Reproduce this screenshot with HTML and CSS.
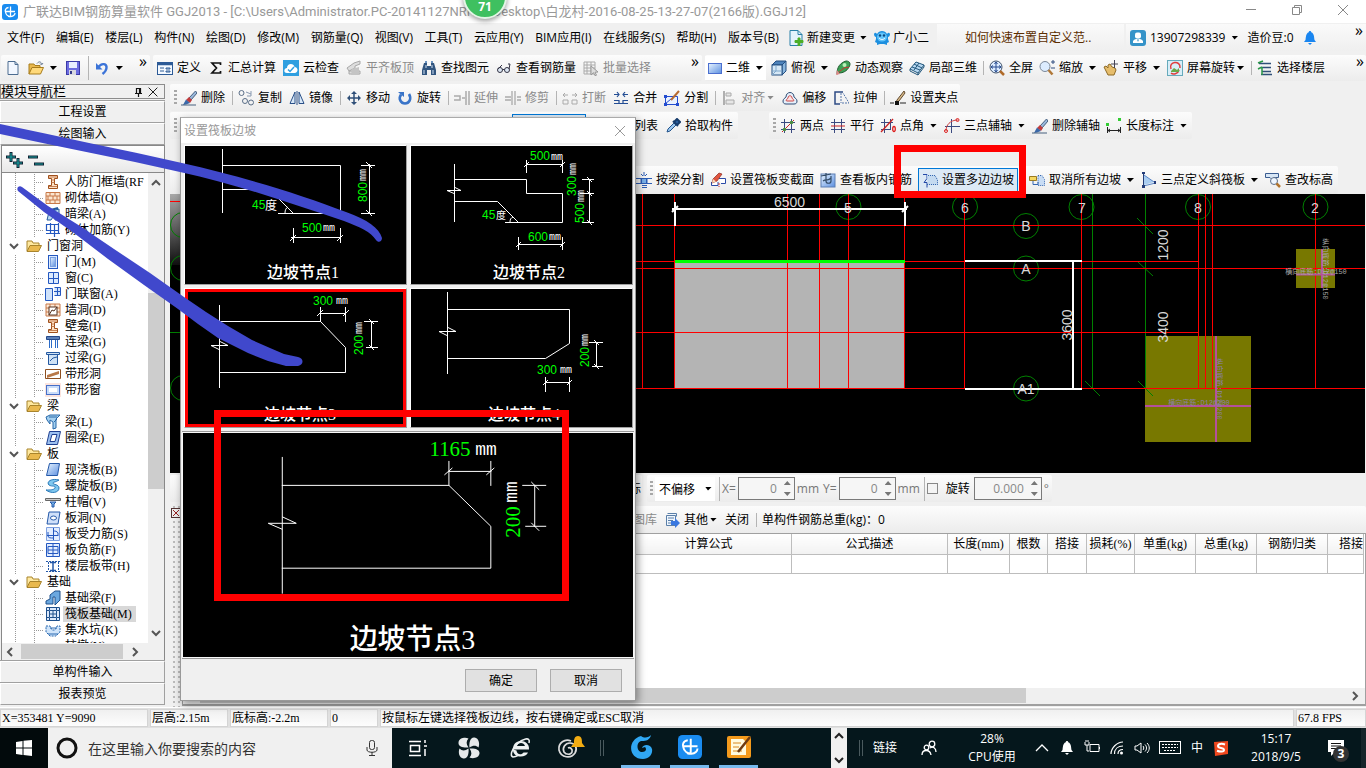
FILE: index.html
```html
<!DOCTYPE html>
<html lang="zh-CN">
<head>
<meta charset="utf-8">
<title>广联达BIM钢筋算量软件 GGJ2013</title>
<link rel="stylesheet" href="styles.css">
</head>
<body>
<svg class="defs" aria-hidden="true">
<defs>
<linearGradient id="blueGrad" x1="0" y1="0" x2="1" y2="1"><stop offset="0" stop-color="#e8f4ff"/><stop offset="1" stop-color="#5b8fe0"/></linearGradient>
<linearGradient id="shade" x1="0" y1="0" x2="0" y2="1"><stop offset="0" stop-color="#a8a8a8"/><stop offset="1" stop-color="#101010"/></linearGradient>
<symbol id="app" viewBox="0 0 16 16"><rect width="16" height="16" rx="3" fill="#1a8cf0"/><path d="M8.500 2.500v8.500c0 2-2 2-2.500.5M3.500 7.500h9.500M6.500 3.500C3 4 3 7 3.500 8c.5 3 3 4.500 5.500 4.500s4-2 4-3.500" fill="none" stroke="#fff" stroke-width="1.300"/></symbol>
<symbol id="new" viewBox="0 0 16 16"><path d="M3 1.500h7l3 3v10H3z" fill="#f2f7ff" stroke="#4c6c90"/><path d="M10 1.500v3h3" fill="none" stroke="#4c6c90"/></symbol>
<symbol id="open" viewBox="0 0 16 16"><path d="M1 14V4h5l1 1.500h5V8" fill="#e9b84d" stroke="#a77c1d"/><path d="M1 14l3-6.500h11.500L12.500 14z" fill="#ffd97a" stroke="#a77c1d"/><path d="M9 3.500c2-2.500 4-2 4.500.5M12 3.500l1.500 1.500 1.500-2" fill="none" stroke="#6a7c94"/></symbol>
<symbol id="save" viewBox="0 0 16 16"><rect x="1.500" y="1.500" width="13" height="13" fill="#6c6ce0" stroke="#3a3aa8"/><rect x="4" y="2" width="8" height="6" fill="#e8eeff"/><rect x="4" y="10" width="7" height="5" fill="#d8d8e0"/><rect x="5" y="11" width="2" height="3" fill="#333a8a"/></symbol>
<symbol id="undo" viewBox="0 0 16 16"><path d="M4 7.500C8 2 13 4 12.500 8c-.3 3-2 4.500-4 6" fill="none" stroke="#3c74d8" stroke-width="2.400"/><path d="M2 3v6.500h6.500z" fill="#3c74d8"/></symbol>
<symbol id="define" viewBox="0 0 16 16"><rect x=".5" y="2.500" width="15" height="12" fill="#f4f9ff" stroke="#2c5a96"/><path d="M1 4h14" stroke="#2c5a96" stroke-width="2.500"/><path d="M3 8h4M3 11h4M9 8h4v1H9zM9 11h4v1H9z" stroke="#2c5a96" fill="none"/></symbol>
<symbol id="sigma" viewBox="0 0 16 16"><path d="M12.500 5V3H4l4.500 5L4 13h8.500v-2" fill="none" stroke="#111" stroke-width="1.700"/></symbol>
<symbol id="cloud" viewBox="0 0 16 16"><rect width="16" height="16" fill="#2f9fe0"/><path d="M4 13c-4 0-3-5 0-5 0-5 7-5 7.500-1 4 0 4 6 0 6z" fill="#fff"/><path d="M5 9.500l2 2 4-4.500" fill="none" stroke="#2f9fe0" stroke-width="1.500"/></symbol>
<symbol id="flatten" viewBox="0 0 16 16"><path d="M1 8l7-5 6-2v3L9 6v2l-6 3zM3 11h11v3H3z" fill="#ddd" stroke="#a8a8a8"/><path d="M6 9l7-2v8H5z" fill="#c4c4c4"/></symbol>
<symbol id="bino" viewBox="0 0 16 16"><path d="M3 3h3v3h4V3h3l2 7v5h-5v-5H6v5H1v-5z" fill="#31557f"/><path d="M4 1h2v2H4zM10 1h2v2h-2z" fill="#6c94c0"/><path d="M3 10v4M12 10v4M5 5v3M11 5v3" stroke="#cfe0f4"/></symbol>
<symbol id="glasses" viewBox="0 0 16 16"><circle cx="4" cy="10" r="2.500" fill="#dde8f4" stroke="#334"/><circle cx="11" cy="10" r="2.500" fill="#dde8f4" stroke="#334"/><path d="M6.500 9.500h2M2 9l4-4M13 9l1-5h-2" fill="none" stroke="#334"/></symbol>
<symbol id="batch" viewBox="0 0 16 16"><path d="M1 2h11v12H1zM1 5h11M1 8h11M1 11h11M4 2v12M8 2v12" fill="none" stroke="#aaa"/><path d="M8 6l7 6-3 .2 1.500 3-1.500.5-1.500-3L8 15z" fill="#ddd" stroke="#999"/></symbol>
<symbol id="rect2d" viewBox="0 0 16 16"><rect x="1.500" y="3.500" width="13" height="10" fill="url(#blueGrad)" stroke="#4b6fd0"/></symbol>
<symbol id="cube" viewBox="0 0 16 16"><path d="M1 5l4-4h10l-4 4z" fill="#4e83bb" stroke="#234e80"/><path d="M11 5l4-4v10l-4 4z" fill="#8ab6de" stroke="#234e80"/><rect x="1" y="5" width="10" height="10" fill="#d6e8f6" stroke="#234e80"/><path d="M5 5v6H1M5 11l-4 4M5 11h6" fill="none" stroke="#7ea8cc"/></symbol>
<symbol id="orbit" viewBox="0 0 16 16"><path d="M2 14C2 7 5 3 11 1c4 0 5 3 3 6-2 4-6 6-10 6z" fill="#3ca054" stroke="#205c30"/><path d="M4 12l5-4 5-1" stroke="#c33" fill="none"/><circle cx="9.500" cy="5" r="2" fill="#b8efb8"/><path d="M1 15l4-1-3-4z" fill="#d88"/></symbol>
<symbol id="local3d" viewBox="0 0 16 16"><path d="M1 9l6-7 8 3-6 8z" fill="#b7d8f2" stroke="#22577c"/><path d="M3 7l8 3M5 4l8 4M5 10l5-7M9 13v2l6-8V5M1 9v2l8 4" fill="none" stroke="#22577c"/></symbol>
<symbol id="full" viewBox="0 0 16 16"><circle cx="7" cy="7" r="6" fill="#dcecff" stroke="#43546c"/><path d="M7 2v10M2 7h10M5.500 4L7 2l1.500 2M5.500 10L7 12l1.500-2M4 5.500L2 7l2 1.500M10 5.500L12 7l-2 1.500" stroke="#274b90" fill="none"/><path d="M11 11l4 4" stroke="#b06a28" stroke-width="2.500"/></symbol>
<symbol id="zoom" viewBox="0 0 16 16"><circle cx="6" cy="6.500" r="5" fill="#dcecff" stroke="#7a8798"/><path d="M9.500 10l4 4.500" stroke="#b07838" stroke-width="2.500"/><path d="M12 2h4M14 0v4M12 8h4" stroke="#334e80"/></symbol>
<symbol id="hand" viewBox="0 0 16 16"><path d="M1 7l2-1 2 2V5l2-1 2 3 3 1 1 2-2 5H5z" fill="#e6bd6c" stroke="#8e6a25"/><path d="M11.500 0v8M8 4h7" stroke="#445"/></symbol>
<symbol id="rotscr" viewBox="0 0 16 16"><rect x=".5" y=".5" width="15" height="15" fill="#d8eef8" stroke="#6ab"/><path d="M4 9c-3-8 10-9 9-1M12 10c-1 4-6 5-8 3" fill="none" stroke="#e03c3c" stroke-width="1.500"/><path d="M4 11l3-3 3 2 2-2v4H4z" fill="#68a848"/></symbol>
<symbol id="floors" viewBox="0 0 16 16"><path d="M2 3.500h12M5 7.500h9M5 11.500h9M4 14.500h11" stroke="#2f4f78" stroke-width="1.500"/><path d="M1 3l5-2M5 7v8M1 9l4-2" stroke="#2a9848" stroke-width="1.500" fill="none"/></symbol>
<symbol id="brush" viewBox="0 0 16 16"><path d="M14.500 1L8 8l2 2 6-7z" fill="#9ab8dc" stroke="#46607f"/><path d="M8 7l3 3-2 3-4-3z" fill="#c23a3a"/><path d="M5 9.500l4 3.500-4 1.500-3 .5z" fill="#3a68a8"/><path d="M0 15h15" stroke="#46607f"/></symbol>
<symbol id="copy" viewBox="0 0 16 16"><g fill="none" stroke="#5b6f88"><circle cx="3.500" cy="3" r="2.500"/><circle cx="7" cy="11" r="2.500"/><circle cx="13" cy="12.500" r="2.500"/></g><path d="M8 2l5 2M13 1v5h-4" fill="none" stroke="#8899b0"/></symbol>
<symbol id="mirror" viewBox="0 0 16 16"><path d="M6 2v11.500H1zM10 2v11.500h5z" fill="#d8e8f8" stroke="#2a5088"/><path d="M8 1v14" stroke="#2a5088"/></symbol>
<symbol id="move" viewBox="0 0 16 16"><path d="M8 2v12M2 8h12" stroke="#2f4f78" stroke-width="1.500"/><path d="M5 4l3-3 3 3zM5 12l3 3 3-3zM4 5L1 8l3 3zM12 5l3 3-3 3z" fill="#2f4f78"/></symbol>
<symbol id="rotate" viewBox="0 0 16 16"><path d="M4 4.500C1 9 4 13.500 8 13.500S15 9 12 4" fill="none" stroke="#3974c8" stroke-width="2.600"/><path d="M1 2h6v5z" fill="#3974c8"/></symbol>
<symbol id="extend" viewBox="0 0 16 16"><path d="M0 6h6v4H0M8 8h3M15 1v14M12 1v14" fill="none" stroke="#aaa" stroke-width="1.500"/></symbol>
<symbol id="trim" viewBox="0 0 16 16"><path d="M0 7h6M0 10h6M7 1v14M10 1v14M12 7h4M12 10h4" stroke="#aaa" stroke-width="1.300"/></symbol>
<symbol id="brk" viewBox="0 0 16 16"><path d="M1 5h5M3 3L1 5l2 2M10 5h5M13 3l2 2-2 2M1 10h5v4H1zM10 10h5v4h-5z" fill="none" stroke="#aaa"/></symbol>
<symbol id="merge" viewBox="0 0 16 16"><path d="M1 4.500h5M4 2l2 2.500L4 7M15 4.500h-5M12 2l-2 2.500L12 7M1 10.500h5v3H1M15 10.500h-5v3h5M6 13.500h4" fill="none" stroke="#234d94" stroke-width="1.200"/></symbol>
<symbol id="split" viewBox="0 0 16 16"><path d="M1.500 6.500h12v8h-12z" fill="#eaf2ff" stroke="#234cd0"/><path d="M1 14l6-5" stroke="#234cd0"/><path d="M15 1L7 10" stroke="#b86b30" stroke-width="2"/><path d="M0 5h3v3H0zM12 13h3v3h-3zM0 13h3v3H0z" fill="#234cd0"/></symbol>
<symbol id="align" viewBox="0 0 16 16"><path d="M3 1v14" stroke="#999" stroke-width="1.500"/><path d="M5 3h5v3H5zM5 10h8v4H5z" fill="#e6e6e6" stroke="#aaa"/></symbol>
<symbol id="offset" viewBox="0 0 16 16"><path d="M1 11c0-2 2-3 3-4 0-6 8-6 8 0 1 1 3 2 3 4s-1 3-3 3H4c-2 0-3-1-3-3z" fill="#e6f0fb" stroke="#2e4b74"/><path d="M4.500 11c-1-1 1-2 1.500-3 0-3 4-3 4 0 .5 1 2.500 2 1.500 3z" fill="#fbe4e4" stroke="#c44"/></symbol>
<symbol id="stretch" viewBox="0 0 16 16"><path d="M10 2H2v12h5" fill="none" stroke="#2e4b84" stroke-width="1.500"/><path d="M8 3v10M9 13h7L10 3" fill="none" stroke="#5677aa" stroke-dasharray="2 1"/></symbol>
<symbol id="grippt" viewBox="0 0 16 16"><path d="M14 1L7 10l-1 3 3-2 6-8z" fill="#d8ba88" stroke="#604a30"/><path d="M0 13h4M10 13h6" stroke="#222"/><path d="M5 11h4v4H5z" fill="#111"/></symbol>
<symbol id="picker" viewBox="0 0 16 16"><path d="M2 14l1-3 6-6 2 2-6 6z" fill="#9cc8f0" stroke="#24548c"/><path d="M8 3l5 5M9 4l3-3 3 3-3 3" stroke="#173c6c" stroke-width="2" fill="#2c60a0"/></symbol>
<symbol id="ax2" viewBox="0 0 16 16"><path d="M1 4.500h14M1 11.500h14M4.500 1v14M11.500 1v14" stroke="#3a4a80"/><path d="M2 14L14 2" stroke="#c22"/><circle cx="4.500" cy="11.500" r="1.800" fill="#4a9040"/><circle cx="11.500" cy="4.500" r="1.800" fill="#4a9040"/></symbol>
<symbol id="axp" viewBox="0 0 16 16"><path d="M1 4.500h14M1 11.500h14M4.500 1v14M11.500 1v14" stroke="#3a4a80"/><path d="M1 8h14" stroke="#c22"/></symbol>
<symbol id="axa" viewBox="0 0 16 16"><path d="M1 4.500h12M1 11.500h10M4.500 1v14M10.500 1v11" stroke="#3a4a80"/><path d="M1 14L13 1" stroke="#c22" stroke-width="1.300"/><ellipse cx="14" cy="11" rx="1.300" ry="2.500" fill="none" stroke="#d22" stroke-width="1.300"/></symbol>
<symbol id="ax3" viewBox="0 0 16 16"><path d="M1 8.500h15M7.500 1v14" stroke="#3a4a80"/><path d="M2 13C2 7 6 2 14 2" fill="none" stroke="#c44"/><circle cx="2" cy="13" r="1.500" fill="none" stroke="#d22"/><circle cx="13.500" cy="2" r="1.500" fill="none" stroke="#d22"/></symbol>
<symbol id="dim" viewBox="0 0 16 16"><path d="M1.500 9v6M14.500 9v6M1 12.500h14M4 11l-2 1.500L4 14M12 11l2 1.500-2 1.500" fill="none" stroke="#222"/><path d="M0 5h3v3H0zM12 0h3v3h-3z" fill="#3c3"/></symbol>
<symbol id="beamsplit" viewBox="0 0 16 16"><path d="M0 6.500h5v5H0M16 6.500h-5v5h5M6 13.500h5M6 15.500h5" fill="none" stroke="#2c5db4"/><rect x="5.500" y="6.500" width="5" height="5" fill="#79b0e8" stroke="#2c5db4"/><path d="M8 0v4M5 2l2 2M11 2L9 4" stroke="#2c5db4"/></symbol>
<symbol id="section" viewBox="0 0 16 16"><path d="M1.500 10v3.500H8V10M9 6.500h6.500v5H11" fill="#fff" stroke="#2b4ba8"/><path d="M9 1l3 1-5 7-5 2 1-4z" fill="#e0553f" stroke="#8a2a20" stroke-width=".7"/><path d="M2 11l1-4 3 2.500z" fill="#f7dcc0"/><path d="M9 11v4" stroke="#c33" stroke-dasharray="2 1"/></symbol>
<symbol id="viewrebar" viewBox="0 0 16 16"><rect x="1" y="2" width="14" height="13" fill="url(#blueGrad)" stroke="#5d7fb4"/><path d="M1 4l10-2M6 1v8c0 3 5 3 5 0V4M3 9c4-3 4 1 8-3" fill="none" stroke="#334c68" stroke-width="1.200"/></symbol>
<symbol id="slope" viewBox="0 0 16 16"><path d="M1 2.500h4v4l-3 4h3v5" fill="none" stroke="#2449a8"/><path d="M5 3h8l3 5v5H6z" fill="#c4daf0"/><path d="M6 3.500h7l2.500 4.500v5M5 12.500h10" fill="none" stroke="#3466b0" stroke-dasharray="1 1"/></symbol>
<symbol id="cancelslope" viewBox="0 0 16 16"><path d="M9 3.500h4l2.500 4v6H9z" fill="#c8dcf4" stroke="#3466b0" stroke-dasharray="1 1"/><path d="M.5 4.500h7v4h-7z" fill="#f5d760" stroke="#9a7a20"/><path d="M4 9v3.500h5V10" fill="none" stroke="#3466b0"/></symbol>
<symbol id="plane3" viewBox="0 0 16 16"><path d="M3 3v10l10-3z" fill="#a9cdf1"/><path d="M2.500 1v13l12-3L3 3" fill="none" stroke="#5b86c8"/><path d="M1 13h3v3H1zM13 9h2v3h-2zM1 0h3v2H1z" fill="#243c78"/><path d="M2.500 1v13" stroke="#243c78"/></symbol>
<symbol id="elev" viewBox="0 0 16 16"><path d="M.5 1.500h13v4H9v4L5 5.500H.5z" fill="#d7e6f5" stroke="#3a5c90"/><circle cx="9" cy="9" r="3.500" fill="#eef6ff" stroke="#5d6f88"/><path d="M11.500 11.500L15 15" stroke="#b2742d" stroke-width="2.500"/></symbol>
<symbol id="newchg" viewBox="0 0 16 16"><path d="M2 .5h8l4 4v11H2z" fill="#e3f2fc" stroke="#2a80a8"/><path d="M10 .5v4h4" fill="none" stroke="#2a80a8"/><path d="M10 8h2v2.500h3v2h-3V16h-2v-3.500H7v-2h3z" fill="#4cae28" stroke="#4cae28"/></symbol>
<symbol id="bot" viewBox="0 0 16 16"><path d="M0 4c1-2 2-1 3 0 2-4 8-4 10 0 1-1 2-2 3 0 0 2-1 3-2 3v2l1 3-2 1v2l-3-1H6l-3 1v-2l-2-1 1-3V7C1 7 0 6 0 4z" fill="#1d8fdf"/><ellipse cx="8" cy="7" rx="5" ry="4.500" fill="#62c4fa"/><circle cx="6" cy="5.500" r="1.200" fill="#0c4880"/><circle cx="10" cy="5.500" r="1.200" fill="#0c4880"/><path d="M5 8c2 2 4 2 6 0" stroke="#fff" fill="none"/></symbol>
<symbol id="user" viewBox="0 0 16 16"><rect width="16" height="16" rx="3" fill="#3593c8"/><rect x="5" y="2.500" width="6" height="6" rx="2" fill="#fff"/><path d="M3 13v-2c2-3 8-3 10 0v2z" fill="#fff"/><path d="M7 9.500h2L8 12z" fill="#3593c8"/></symbol>
<symbol id="bell" viewBox="0 0 16 16"><path d="M8 1c1 0 1.200.6 1.200 1.300C12.500 3.500 12 8 12.500 10l1.500 2H2l1.500-2C4 8 3.500 3.500 6.800 2.300 6.800 1.600 7 1 8 1z" fill="currentColor"/><path d="M6 13h4l-2 2z" fill="currentColor"/></symbol>
<symbol id="export" viewBox="0 0 16 16"><path d="M3.500 1.500h9v3M2.500 3.500h9v10h-9z" fill="#eef5fd" stroke="#5a7fa8"/><path d="M4 6h6M4 8.500h5M4 11h3" stroke="#5a7fa8"/><path d="M7 9h4V6l5 5-5 5v-3H7z" fill="#3a78e0"/></symbol>
<symbol id="folder" viewBox="0 0 16 16"><path d="M1 13V3h5l1 2h6v3" fill="#ffe9a0" stroke="#a8842c"/><path d="M1 13.500l3-6h11.500l-3 6z" fill="#e9b94e" stroke="#a8842c"/></symbol>
<symbol id="tframe" viewBox="0 0 16 16"><path d="M3.500 1.500h9v3h-3v6h3v4h-9v-3h3v-7h-3z" fill="#ffe2c4" stroke="#a0501c"/><path d="M6 6h4M6 8.500h4M4 12.500h8M4 3h8" stroke="#b8683a" stroke-width=".8"/></symbol>
<symbol id="tbrick" viewBox="0 0 16 16"><path d="M1 2.500h14v11H1zM1 6h14M1 10h14M5 2v4M10 2v4M3 6v4M8 6v4M12 6v4M5 10v4M10 10v4" fill="#fbe6d0" stroke="#c87948"/></symbol>
<symbol id="thidden" viewBox="0 0 16 16"><path d="M2 14l2-8 10-3v11h-4V8L6 14z" fill="#bcdcf4" stroke="#24589c"/><path d="M2 5l11-3" stroke="#24589c" stroke-width="2"/></symbol>
<symbol id="trebar" viewBox="0 0 16 16"><path d="M1.500 2.500h12v6h-12zM1 11.500h14M5.500 1v11M9.500 3v12M13.500 1v11" fill="none" stroke="#2458c0" stroke-width="1.200"/></symbol>
<symbol id="tdoor" viewBox="0 0 16 16"><rect x="3.500" y="1.500" width="9" height="13" fill="#dcebff" stroke="#2458c0"/><rect x="5.500" y="3.500" width="5" height="9" fill="url(#blueGrad)" stroke="#7aa0e0"/></symbol>
<symbol id="twin" viewBox="0 0 16 16"><path d="M3.500 2.500h10v11h-10zM8.500 2v12M3 8.500h11" fill="#dcebff" stroke="#2458c0"/></symbol>
<symbol id="tdw" viewBox="0 0 16 16"><path d="M.5 2.500h7v12h-7zM9.500 1.500h6v8h-6M12.500 1v8M9 5.500h7" fill="#cfe2fb" stroke="#2458c0"/></symbol>
<symbol id="thole" viewBox="0 0 16 16"><path d="M1 2h14v12H1zM1 6h14M1 10h14M5 2v4M10 2v4" fill="#fde9d6" stroke="#c87948"/><rect x="4" y="5" width="8" height="8" fill="#fff" stroke="#532"/><path d="M4 13l3-5 2 1 3-4" fill="none" stroke="#532"/></symbol>
<symbol id="tlink" viewBox="0 0 16 16"><path d="M1.500 2.500h13v3h-13z" fill="#5a7fb8" stroke="#24488a"/><path d="M4.500 6v8M6.500 6v8M10.500 6v8M12.500 6v8" stroke="#2c6cc8"/></symbol>
<symbol id="tlintel" viewBox="0 0 16 16"><path d="M1.500 2.500h13v2h-13zM3.500 4.500h9v10h-9z" fill="#cfe2f5" stroke="#2458a0"/><path d="M5 11l3-3 4-1" fill="none" stroke="#2458a0"/></symbol>
<symbol id="tstrip" viewBox="0 0 16 16"><path d="M.5 3.500h15v9H.5z" fill="#fff" stroke="#8e5020"/><path d="M2 9l12-4v3L2 12z" fill="#b87848"/></symbol>
<symbol id="tstripw" viewBox="0 0 16 16"><path d="M0 1h16v14H0z" fill="#fbe4de"/><rect x="1.500" y="3.500" width="13" height="9" fill="#c8dcfa" stroke="#4870c8"/><rect x="4" y="6" width="8" height="4" fill="#fff"/></symbol>
<symbol id="tbeam" viewBox="0 0 16 16"><path d="M1 3l4-2h10l-4 4v9l-3 1V8L5 6v4L2 6z" fill="#a4d0f0" stroke="#2868a8"/><path d="M4 3h8M9 8l3-3" stroke="#2868a8"/></symbol>
<symbol id="tring" viewBox="0 0 16 16"><path d="M4.500 1.500h11l-3 13h-11zM7 4.500h5L10 11.500H5z" fill="#9cc0f0" fill-rule="evenodd" stroke="#1e3f90"/></symbol>
<symbol id="tslab" viewBox="0 0 16 16"><path d="M4.500 1.500h10l-2 12h-11z" fill="url(#blueGrad)" stroke="#2458a8"/></symbol>
<symbol id="tspiral" viewBox="0 0 16 16"><path d="M14 2C6 0 1 4 4 7c3 2 7 0 6 3-1 2-5 2-9 2 5 4 13 3 13-2 0-4-6-3-6-5 0-1 3-1 6-3z" fill="#7fc8f0" stroke="#2878b8"/></symbol>
<symbol id="tcap" viewBox="0 0 16 16"><path d="M.5 4.500h15v2H.5z" fill="#ccc" stroke="#666"/><path d="M5 8h6l-2 2v3H7v-3z" fill="#74b0e8" stroke="#2458a8"/></symbol>
<symbol id="tslabhole" viewBox="0 0 16 16"><path d="M4 2h11l-2 12H2z" fill="#cfe0fa" stroke="#2458a8"/><ellipse cx="8.500" cy="8" rx="3" ry="2" fill="#fff" stroke="#2458a8"/></symbol>
<symbol id="tforce" viewBox="0 0 16 16"><path d="M1.500 1.500h13v13h-13z" fill="#e2edff" stroke="#7ea0e0"/><path d="M8.500 2v12M2 9.500h11M3 6v4c0 2 3 2 5 2M13 10V7c-1-2-3-2-5-2" fill="none" stroke="#2458c0"/></symbol>
<symbol id="tneg" viewBox="0 0 16 16"><path d="M1.500 1.500h13v13h-13z" fill="#e2edff" stroke="#2458c0"/><path d="M8 2v12M3 4.500h10v7H3zM3 8h10" fill="none" stroke="#2458c0"/></symbol>
<symbol id="tband" viewBox="0 0 16 16"><path d="M1 3.500h14M1 13.500h14M3.500 4v8M13.500 4v8" stroke="#2458a8" stroke-dasharray="2 1"/><path d="M5 12.500h6M8 4v8M5 4.500h6" stroke="#2458a8" stroke-width="1.500"/></symbol>
<symbol id="tfbeam" viewBox="0 0 16 16"><path d="M5 5l5-4h5v9l-5 5V7H8v7H1v-3l4-2z" fill="#6ba8e0" stroke="#1e508c"/></symbol>
<symbol id="traft" viewBox="0 0 16 16"><path d="M1.500 1.500h13v13h-13zM4.500 4.500h7v7h-7z" fill="#dce9fb" stroke="#1e508c"/><path d="M4 8h8M8 4v8M1 4.500h3M12 4.500h3M1 11.500h3M12 11.500h3M4.500 1v3M11.500 1v3M4.500 12v3M11.500 12v3" fill="none" stroke="#1e508c"/></symbol>
<symbol id="tpit" viewBox="0 0 16 16"><path d="M1 4h4l2 4h3l2-4h3v6l-4 4H5l-4-4z" fill="#cfe4fa" stroke="#2868b0" stroke-dasharray="2 1"/><path d="M3 12h10M5 6h7" stroke="#2868b0"/></symbol>
<symbol id="close" viewBox="0 0 16 16"><path d="M3 3l10 10M13 3L3 13" stroke="currentColor" fill="none"/></symbol>
<symbol id="chev" viewBox="0 0 16 16"><path d="M4 6l4 4 4-4" stroke="currentColor" stroke-width="2" fill="none"/></symbol>
</defs>
</svg>

<div class="app">
  <header class="titlebar">
    <svg class="ic"><use href="#app"/></svg>
    <h1 class="caption">广联达BIM钢筋算量软件 GGJ2013 - [C:\Users\Administrator.PC-20141127NRHM\Desktop\白龙村-2016-08-25-13-27-07(2166版).GGJ12]</h1>
    <div class="winbtns">
      <button aria-label="最小化"><svg class="ic" viewBox="0 0 16 16"><path d="M3 7.500h10" stroke="#888"/></svg></button>
      <button aria-label="还原"><svg class="ic" viewBox="0 0 16 16"><path d="M3.500 5.500h7v7h-7zM5.500 5V3.500h7v7H11" fill="none" stroke="#888"/></svg></button>
      <button aria-label="关闭"><svg class="ic"><use href="#close"/></svg></button>
    </div>
    <div class="ball">71</div>
  </header>

  <div class="menurow">
    <nav class="menus">
      <button>文件(F)</button><button>编辑(E)</button><button>楼层(L)</button><button>构件(N)</button><button>绘图(D)</button><button>修改(M)</button><button>钢筋量(Q)</button><button>视图(V)</button><button>工具(T)</button><button>云应用(Y)</button><button>BIM应用(I)</button><button>在线服务(S)</button><button>帮助(H)</button><button>版本号(B)</button>
    </nav>
    <div class="bar plain">
      <button class="tool"><svg class="ic"><use href="#newchg"/></svg>新建变更<i class="dd"></i></button>
      <button class="tool"><svg class="ic"><use href="#bot"/></svg>广小二</button>
    </div>
    <div class="panel tip"><a href="#">如何快速布置自定义范..</a></div>
    <div class="panel account">
      <button class="tool"><svg class="ic"><use href="#user"/></svg>13907298339<i class="dd"></i></button>
      <span>造价豆:0</span>
      <button class="tool blue" aria-label="消息"><svg class="ic"><use href="#bell"/></svg></button>
      <span class="more">»</span>
    </div>
  </div>

  <div class="toolrow">
    <div class="bar g-file">
      <button class="tool" aria-label="新建"><svg class="ic"><use href="#new"/></svg></button>
      <button class="tool" aria-label="打开"><svg class="ic"><use href="#open"/></svg><i class="dd"></i></button>
      <button class="tool" aria-label="保存"><svg class="ic"><use href="#save"/></svg></button>
      <i class="sep tall"></i>
      <button class="tool" aria-label="撤销"><svg class="ic"><use href="#undo"/></svg><i class="dd"></i></button>
      <span class="more">»</span>
    </div>
    <div class="bar g-calc">
      <button class="tool"><svg class="ic"><use href="#define"/></svg>定义</button>
      <button class="tool"><svg class="ic"><use href="#sigma"/></svg>汇总计算</button>
      <button class="tool"><svg class="ic"><use href="#cloud"/></svg>云检查</button>
      <button class="tool" disabled><svg class="ic"><use href="#flatten"/></svg>平齐板顶</button>
      <button class="tool"><svg class="ic"><use href="#bino"/></svg>查找图元</button>
      <button class="tool"><svg class="ic"><use href="#glasses"/></svg>查看钢筋量</button>
      <button class="tool" disabled><svg class="ic"><use href="#batch"/></svg>批量选择</button>
      <span class="more">»</span>
    </div>
    <div class="bar tight g-view">
      <label class="combo dim2"><svg class="ic"><use href="#rect2d"/></svg><select aria-label="视图维度"><option>二维</option></select><i class="dd"></i></label>
      <button class="tool"><svg class="ic"><use href="#cube"/></svg>俯视<i class="dd"></i></button>
      <button class="tool"><svg class="ic"><use href="#orbit"/></svg>动态观察</button>
      <button class="tool"><svg class="ic"><use href="#local3d"/></svg>局部三维</button>
      <i class="sep"></i>
      <button class="tool"><svg class="ic"><use href="#full"/></svg>全屏</button>
      <button class="tool"><svg class="ic"><use href="#zoom"/></svg>缩放<i class="dd"></i></button>
      <button class="tool"><svg class="ic"><use href="#hand"/></svg>平移<i class="dd"></i></button>
      <button class="tool"><svg class="ic"><use href="#rotscr"/></svg>屏幕旋转<i class="dd near"></i></button>
      <i class="sep"></i>
      <button class="tool"><svg class="ic"><use href="#floors"/></svg>选择楼层</button>
      <span class="more">»</span>
    </div>
  </div>

  <div class="body">
    <aside class="side">
      <div class="sidehead"><span>模块导航栏</span><svg class="ic" viewBox="0 0 16 16"><path d="M5 9.500h7M6.500 9V4.500h4V9M9.500 4v5M8.500 10v3" fill="none" stroke="#111" stroke-width="1.200"/></svg><button aria-label="关闭导航栏"><svg class="ic"><use href="#close"/></svg></button></div>
      <button class="navbtn">工程设置</button>
      <button class="navbtn">绘图输入</button>
      <div class="treebox">
        <div class="treetools"><svg class="pm" viewBox="0 0 44 20"><path d="M8 2v10M3 7h10M15 8v10M10 13h10M25 7h10M31 14h10" stroke="#123" stroke-width="3"/><path d="M8 3v8M4 7h8M15 9v8M11 13h8M26 7h8M32 14h8" stroke="#16a0a0" stroke-width="1.200"/></svg></div>
        <div class="treeview">
          <ul class="tree">
            <li class="leaf"><svg class="ic"><use href="#tframe"/></svg><span>人防门框墙(RF</span></li>
            <li class="leaf"><svg class="ic"><use href="#tbrick"/></svg><span>砌体墙(Q)</span></li>
            <li class="leaf"><svg class="ic"><use href="#thidden"/></svg><span>暗梁(A)</span></li>
            <li class="leaf"><svg class="ic"><use href="#trebar"/></svg><span>砌体加筋(Y)</span></li>
            <li class="branch"><svg class="tw"><use href="#chev"/></svg><svg class="ic"><use href="#folder"/></svg><span>门窗洞</span></li>
            <li class="leaf"><svg class="ic"><use href="#tdoor"/></svg><span>门(M)</span></li>
            <li class="leaf"><svg class="ic"><use href="#twin"/></svg><span>窗(C)</span></li>
            <li class="leaf"><svg class="ic"><use href="#tdw"/></svg><span>门联窗(A)</span></li>
            <li class="leaf"><svg class="ic"><use href="#thole"/></svg><span>墙洞(D)</span></li>
            <li class="leaf"><svg class="ic"><use href="#tframe"/></svg><span>壁龛(I)</span></li>
            <li class="leaf"><svg class="ic"><use href="#tlink"/></svg><span>连梁(G)</span></li>
            <li class="leaf"><svg class="ic"><use href="#tlintel"/></svg><span>过梁(G)</span></li>
            <li class="leaf"><svg class="ic"><use href="#tstrip"/></svg><span>带形洞</span></li>
            <li class="leaf"><svg class="ic"><use href="#tstripw"/></svg><span>带形窗</span></li>
            <li class="branch"><svg class="tw"><use href="#chev"/></svg><svg class="ic"><use href="#folder"/></svg><span>梁</span></li>
            <li class="leaf"><svg class="ic"><use href="#tbeam"/></svg><span>梁(L)</span></li>
            <li class="leaf"><svg class="ic"><use href="#tring"/></svg><span>圈梁(E)</span></li>
            <li class="branch"><svg class="tw"><use href="#chev"/></svg><svg class="ic"><use href="#folder"/></svg><span>板</span></li>
            <li class="leaf"><svg class="ic"><use href="#tslab"/></svg><span>现浇板(B)</span></li>
            <li class="leaf"><svg class="ic"><use href="#tspiral"/></svg><span>螺旋板(B)</span></li>
            <li class="leaf"><svg class="ic"><use href="#tcap"/></svg><span>柱帽(V)</span></li>
            <li class="leaf"><svg class="ic"><use href="#tslabhole"/></svg><span>板洞(N)</span></li>
            <li class="leaf"><svg class="ic"><use href="#tforce"/></svg><span>板受力筋(S)</span></li>
            <li class="leaf"><svg class="ic"><use href="#tneg"/></svg><span>板负筋(F)</span></li>
            <li class="leaf"><svg class="ic"><use href="#tband"/></svg><span>楼层板带(H)</span></li>
            <li class="branch"><svg class="tw"><use href="#chev"/></svg><svg class="ic"><use href="#folder"/></svg><span>基础</span></li>
            <li class="leaf"><svg class="ic"><use href="#tfbeam"/></svg><span>基础梁(F)</span></li>
            <li class="leaf sel"><svg class="ic"><use href="#traft"/></svg><span>筏板基础(M)</span></li>
            <li class="leaf"><svg class="ic"><use href="#tpit"/></svg><span>集水坑(K)</span></li>
            <li class="leaf"><svg class="ic"></svg><span>柱墩(Y)</span></li>
          </ul>
          <div class="vscroll"><svg class="ic up"><use href="#chev"/></svg><i class="vthumb"></i><svg class="ic"><use href="#chev"/></svg></div>
        </div>
        <div class="hscroll"><svg class="ic left"><use href="#chev"/></svg><i class="hthumb"></i><svg class="ic right"><use href="#chev"/></svg></div>
      </div>
      <button class="navbtn">单构件输入</button>
      <button class="navbtn">报表预览</button>
    </aside>

    <main class="main">
      <div class="bar row-edit">
        <i class="grip"></i>
        <button class="tool"><svg class="ic"><use href="#brush"/></svg>删除</button>
        <i class="sep"></i>
        <button class="tool"><svg class="ic"><use href="#copy"/></svg>复制</button>
        <button class="tool"><svg class="ic"><use href="#mirror"/></svg>镜像</button>
        <i class="sep"></i>
        <button class="tool"><svg class="ic"><use href="#move"/></svg>移动</button>
        <button class="tool"><svg class="ic"><use href="#rotate"/></svg>旋转</button>
        <i class="sep"></i>
        <button class="tool" disabled><svg class="ic"><use href="#extend"/></svg>延伸</button>
        <button class="tool" disabled><svg class="ic"><use href="#trim"/></svg>修剪</button>
        <i class="sep"></i>
        <button class="tool" disabled><svg class="ic"><use href="#brk"/></svg>打断</button>
        <button class="tool"><svg class="ic"><use href="#merge"/></svg>合并</button>
        <button class="tool"><svg class="ic"><use href="#split"/></svg>分割</button>
        <i class="sep"></i>
        <button class="tool" disabled><svg class="ic"><use href="#align"/></svg>对齐<i class="dd near"></i></button>
        <button class="tool"><svg class="ic"><use href="#offset"/></svg>偏移</button>
        <button class="tool"><svg class="ic"><use href="#stretch"/></svg>拉伸</button>
        <i class="sep"></i>
        <button class="tool"><svg class="ic"><use href="#grippt"/></svg>设置夹点</button>
      </div>
      <div class="row-comp">
        <div class="bar g-comp">
          <i class="grip"></i>
          <button class="tool picked g-prop">属性</button>
          <button class="tool">构件列表</button>
          <button class="tool"><svg class="ic"><use href="#picker"/></svg>拾取构件</button>
        </div>
        <div class="bar tight g-axis">
          <i class="grip"></i>
          <button class="tool"><svg class="ic"><use href="#ax2"/></svg>两点</button>
          <button class="tool"><svg class="ic"><use href="#axp"/></svg>平行</button>
          <button class="tool"><svg class="ic"><use href="#axa"/></svg>点角<i class="dd"></i></button>
          <button class="tool"><svg class="ic"><use href="#ax3"/></svg>三点辅轴<i class="dd"></i></button>
          <button class="tool"><svg class="ic"><use href="#brush"/></svg>删除辅轴</button>
          <button class="tool"><svg class="ic"><use href="#dim"/></svg>长度标注<i class="dd"></i></button>
        </div>
      </div>
      <div class="bar tight row-slab">
        <button class="tool"><svg class="ic"><use href="#beamsplit"/></svg>按梁分割</button>
        <button class="tool"><svg class="ic"><use href="#section"/></svg>设置筏板变截面</button>
        <button class="tool"><svg class="ic"><use href="#viewrebar"/></svg>查看板内钢筋</button>
        <button class="tool picked"><svg class="ic"><use href="#slope"/></svg>设置多边边坡</button>
        <button class="tool after"><svg class="ic"><use href="#cancelslope"/></svg>取消所有边坡<i class="dd"></i></button>
        <button class="tool"><svg class="ic"><use href="#plane3"/></svg>三点定义斜筏板<i class="dd"></i></button>
        <button class="tool"><svg class="ic"><use href="#elev"/></svg>查改标高</button>
      </div>

      <div class="canvas">
        <svg viewBox="170 194 1196 279" preserveAspectRatio="xMinYMin slice">
          <rect x="170" y="194" width="12" height="71" fill="url(#shade)"/>
          <rect x="1145" y="336" width="106" height="106" fill="#787800"/>
          <rect x="1296" y="249" width="39" height="39" fill="#787800"/>
          <rect x="675" y="261" width="230" height="127" fill="#b4b4b4"/>
          <g fill="none" stroke="#008000">
            <circle cx="848.500" cy="207" r="12.500"/><circle cx="965" cy="207" r="12.500"/><circle cx="1081.500" cy="207" r="12.500"/><circle cx="1198" cy="207" r="12.500"/><circle cx="1315.500" cy="207" r="12.500"/>
            <circle cx="1026" cy="226" r="12.500"/><circle cx="1026" cy="268.500" r="12.500"/><circle cx="1026" cy="388.500" r="12.500"/>
            <circle cx="183" cy="225" r="12.500"/><circle cx="183" cy="268" r="12.500"/><circle cx="183" cy="388" r="12.500"/>
            <path d="M1092.500 194v194M1145.500 194v194M170 332.500h12M1137 218l16 16M1138 262l15 14M1085 381l15 15M1138 381l15 15"/>
          </g>
          <path d="M642.500 194v195M674.500 194v195M787.500 194v195M819.500 194v195M848.500 194v195M904.500 194v195M964.500 194v195M1081.500 194v195M1198.500 194v195M1205.500 194v195M1212.500 194v195M1315.500 194v195M170 201.500h12M636 225.500h730M636 261.500h562M636 268.500h730M636 332.500h562M636 388.500h730" fill="none" stroke="#f00"/>
          <path d="M675 261.500h230" stroke="#0f0" stroke-width="3"/>
          <path d="M672 209h235M675 202v24M905 202v24M965 261h117M965 389h117M1073 260v130M672 212l6-6M902 212l6-6" stroke="#fff" stroke-width="2"/>
          <path d="M1216 336v106M1145 406h106M1322 249v39M1296 274.500h39" stroke="#b4509c" stroke-width="2"/>
          <g class="cad">
            <text x="789.500" y="207">6500</text><text x="848" y="213">5</text><text x="965" y="213">6</text><text x="1082" y="213">7</text><text x="1198" y="213">8</text><text x="1315" y="213">2</text>
            <text x="1026" y="231">B</text><text x="1026" y="274">A</text><text x="1026" y="394">A1</text>
            <text transform="translate(1168 245) rotate(-90)">1200</text><text transform="translate(1168 327) rotate(-90)">3400</text><text transform="translate(1072 325) rotate(-90)">3600</text>
          </g>
          <g class="rebar">
            <text x="1199" y="405">横向底筋:D12@200</text><text transform="translate(1217 389) rotate(90)">纵向底筋:D12@200</text>
            <text x="1316" y="274" class="light">横向底筋:D12@150</text><text transform="translate(1323 269) rotate(90)" class="light">纵向底筋:D12@150</text>
          </g>
        </svg>
      </div>

      <div class="row-snap">
        <div class="bar g-snap"><button class="tool">坐标</button></div>
        <div class="bar g-off">
          <i class="grip"></i>
          <label class="combo off"><select aria-label="偏移方式"><option>不偏移</option></select><i class="dd"></i></label>
          <i class="sep tall"></i>
          <label for="dx">X=</label><span class="spin"><input id="dx" value="0" disabled><i class="sp"></i></span><span>mm</span>
          <label for="dy" class="ylab">Y=</label><span class="spin"><input id="dy" value="0" disabled><i class="sp"></i></span><span>mm</span>
          <i class="sep tall"></i>
          <label class="check"><input type="checkbox">旋转</label>
          <span class="spin wide"><input aria-label="旋转角度" value="0.000" disabled><i class="sp"></i></span><span>°</span>
        </div>
      </div>

      <div class="detail">
        <div class="splitter"><svg viewBox="0 0 10 10"><rect x=".5" y=".5" width="9" height="9" fill="#eee" stroke="#533"/><path d="M2 2l6 6M8 2L2 8" stroke="#922"/></svg></div>
        <section class="rebarpane">
          <div class="bar row-rebar">
            <button class="tool" disabled>钢筋图库</button>
            <button class="tool"><svg class="ic"><use href="#export"/></svg>其他<i class="dd near"></i></button>
            <button class="tool">关闭</button>
            <i class="sep"></i>
            <span>单构件钢筋总重(kg)：0</span>
          </div>
          <div class="gridbox">
            <table>
              <colgroup><col><col class="c-formula"><col class="c-desc"><col class="c-len"><col class="c-num"><col class="c-lap"><col class="c-loss"><col class="c-kg"><col class="c-kg"><col class="c-type"><col class="c-last"></colgroup>
              <thead><tr><th></th><th>计算公式</th><th>公式描述</th><th>长度(mm)</th><th>根数</th><th>搭接</th><th>损耗(%)</th><th>单重(kg)</th><th>总重(kg)</th><th>钢筋归类</th><th class="cut">搭接</th></tr></thead>
              <tbody><tr><td></td><td></td><td></td><td></td><td></td><td></td><td></td><td></td><td></td><td></td><td></td></tr></tbody>
            </table>
            <div class="gridscroll"><i></i><svg class="ic right"><use href="#chev"/></svg></div>
          </div>
        </section>
      </div>
    </main>
  </div>

  <div class="status">
    <span class="s-xy">X=353481 Y=9090</span><span class="s-h">层高:2.15m</span><span class="s-b">底标高:-2.2m</span><span class="s-0">0</span><span class="s-msg">按鼠标左键选择筏板边线，按右键确定或ESC取消</span><span class="s-fps">67.8 FPS</span>
  </div>

  <footer class="taskbar">
    <button class="start" aria-label="开始"><svg class="ic" viewBox="0 0 16 16"><path d="M0 2l6.500-1v6.500H0zM7.500.8L16 0v7.500H7.500zM0 8.500h6.500V15L0 14zM7.500 8.500H16V16l-8.500-1z" fill="#fff"/></svg></button>
    <label class="search"><svg class="ring" viewBox="0 0 22 22"><circle cx="11" cy="11" r="9" fill="none" stroke="#111" stroke-width="3"/></svg><input placeholder="在这里输入你要搜索的内容" aria-label="搜索"><svg class="ic" viewBox="0 0 16 16"><rect x="5.500" y=".5" width="5" height="9" rx="2" fill="none" stroke="#333"/><path d="M3 7v3c0 3 10 3 10 0V7M8 12v3.500M5 15.500h6" fill="none" stroke="#333"/></svg></label>
    <div class="apps">
      <button aria-label="任务视图"><svg viewBox="0 0 24 24"><path d="M3 5.500h12M3 19.500h12M4.500 9.500h9v6h-9zM19 4v3M19 13v7M18 10h3" fill="none" stroke="#fff" stroke-width="1.500"/></svg></button>
      <button aria-label="浏览器"><svg viewBox="0 0 24 24"><path d="M11.500 11.500C7 12 1 11 1.500 6.500 2 2 8 1 11.500 2.500 9 5 9 8 11.500 11.500zM12.500 11.500C12 7 13 1 17.500 1.500 22 2 23 8 21.500 11.500 19 9 16 9 12.500 11.500zM12.500 12.500c4.500-.5 10.500.5 10 5-.5 4.500-6.500 5.500-10 4 2.500-2.500 2.500-5.500 0-9zM11.500 12.500c.5 4.500-.5 10.500-5 10C2 22 1 16 2.500 12.500c2.500 2.500 5.500 2.500 9 0z" fill="#e6e9ea"/></svg></button>
      <button aria-label="Internet Explorer"><svg viewBox="0 0 24 24"><path d="M5 13.500h16c1-10-15-12-16-1-1 10 13 10 15 4h-4.500c-2 3-7 2-7-2M9 10c1-4 7-4 8 0z" fill="#eef2f2" fill-rule="evenodd"/><path d="M21 7c2-7-7-4-12 1-6 6-7 12-4 13 2 0 4-1 6-2" fill="none" stroke="#eef2f2" stroke-width="1.600"/></svg></button>
      <button class="helper" aria-label="助手"><svg viewBox="0 0 28 24"><path d="M14 5C8 2 1 7 2 14c2 8 12 9 16 3 3-5 0-10-5-10S5 12 7 16c2 3 7 3 8 0 1-3-2-5-4-4" fill="none" stroke="#ddd" stroke-width="1.700"/><path d="M21 0c4 0 4 4 4 7l3 4H14l3-4c0-3 0-7 4-7z" fill="#f2ac12"/></svg></button>
      <i class="bars"></i>
      <button class="run" aria-label="广联达"><svg viewBox="0 0 24 24"><path d="M12 1c4 3 8 1 10-1-1 5-5 6-9 6-6 0-6 11 0 11 4 0 5-3 3-5l-3 1c2-5 9-3 10 1 1 5-3 10-9 10C-1 24-2 5 12 1z" fill="#30a8f4"/></svg></button>
      <button class="run" aria-label="钢筋算量"><svg viewBox="0 0 16 16"><use href="#app"/></svg></button>
      <button class="run" aria-label="画图笔记"><svg viewBox="0 0 24 24"><rect x="0" y="1" width="24" height="22" rx="2" fill="#f49a1c"/><path d="M4 4h12l3 3v13H4z" fill="#fffbe0"/><path d="M6 8h8M6 12h6M6 16h9" stroke="#d88820"/><path d="M23 2L11 17" stroke="#6e3a10" stroke-width="2.500"/></svg></button>
    </div>
    <div class="tscroll"><svg class="ic up"><use href="#chev"/></svg><svg class="ic"><use href="#chev"/></svg></div>
    <i class="bars"></i>
    <span class="links">链接</span>
    <svg class="ic people" viewBox="0 0 16 16"><g fill="none" stroke="#fff" stroke-width="1.300"><circle cx="11" cy="4" r="2.800"/><circle cx="5.500" cy="7.500" r="2.300"/><path d="M1 15c0-6 8-6 9 0M9 8c3-2 6 0 6 4"/></g></svg>
    <div class="two cpu"><span>28%</span><span>CPU使用</span></div>
    <div class="tray">
      <svg class="ic" viewBox="0 0 16 16"><path d="M2 11l6-6 6 6" fill="none" stroke="#fff" stroke-width="1.300"/></svg>
      <svg class="ic"><use href="#bell"/></svg>
      <svg class="ic" viewBox="0 0 16 16"><path d="M6 4.500h9v7H6zM1 2v3h4V2M3 5v6h2M2 0v2M4 0v2M15.500 7v2" fill="none" stroke="#fff"/></svg>
      <svg class="ic" viewBox="0 0 16 16"><g fill="none" stroke="#fff" stroke-width="1.200"><path d="M2 14C2 8 8 2 14 2M5.500 14C5.500 9 9 6 14 6M9 14c0-3 2-4.500 5-4.500"/></g><circle cx="12.500" cy="13" r="1.500" fill="#fff"/></svg>
      <svg class="ic" viewBox="0 0 16 16"><path d="M1 6h2l4-3v10l-4-3H1zM9 6c1 1 1 3 0 4M11 4.500c2 2 2 5 0 7M13 3c3 3 3 7 0 10" fill="none" stroke="#fff"/></svg>
      <svg class="kb" viewBox="0 0 22 14"><rect x=".5" y=".5" width="21" height="12" fill="none" stroke="#fff"/><path d="M3 3.500h16M3 6.500h16M5 9.500h12" stroke="#fff" stroke-dasharray="2 1"/></svg>
      <span class="zh">中</span>
      <svg class="ic" viewBox="0 0 16 16"><path d="M1 2l14-1v13l-13 2z" fill="#f0481e"/><path d="M12 4.500c-3-1-7-1-7 1.500 0 3 6 1 6 4 0 2-4 2-7 .8" fill="none" stroke="#fff" stroke-width="2"/></svg>
    </div>
    <div class="two clock"><span>15:17</span><span>2018/9/5</span></div>
    <button class="notif" aria-label="通知"><svg viewBox="0 0 18 18"><path d="M1 1h16v12H8l-4 4v-4H1z" fill="#fff"/><path d="M4 4.500h10M4 7h10M4 9.500h8" stroke="#111"/></svg><b>3</b></button>
  </footer>
</div>

<div class="dialog" role="dialog" aria-label="设置筏板边坡">
  <div class="dhead"><span>设置筏板边坡</span><button aria-label="关闭"><svg class="ic"><use href="#close"/></svg></button></div>
  <div class="nodes">
    <button class="node"><svg viewBox="185 146 221 138" aria-label="边坡节点1">
      <path class="ln" d="M222.500 149v64M222 165.500h118.500v48M222 189.500h57M278 198l15.500 15.500M278 213.500h63M285 213c0-3 1-5 3-6M293.500 228v15M340.500 228v15M291 237.500h50M290 241l6-6M337 241l6-6M369.500 164v50M361 165.500h14M361 213.500h14M366 162l6 6M366 210l6 6"/>
      <text class="g" x="252" y="209">45</text><text class="w deg" x="265" y="210">度</text><text class="g" x="302" y="232">500</text><text class="w" x="323" y="231">mm</text>
      <text class="g" transform="translate(367 202) rotate(-90)">800</text><text class="w" transform="translate(366 181) rotate(-90)">mm</text>
      <text class="cap" x="303" y="278">边坡节点1</text></svg></button>
    <button class="node"><svg viewBox="411 146 221 138" aria-label="边坡节点2">
      <path class="ln" d="M454.500 164v58M454 187l7 3.500h-14l7 3M454 179.500h72.500v14h36v29H505M454 201.500h43.500l21 21M510 222c0-3 1-4 3-5M526.500 160v13M562.500 160v13M526 164.500h37M524 167l5-5M560 167l5-5M518.500 237v13M562.500 237v13M518 244.500h45M516 247l5-5M560 247l5-5M589.500 179v44M582 179.500h12M580 193.500h14M582 222.500h12M587 177l5 5M587 191l5 5M587 220l5 5"/>
      <text class="g" x="530" y="160">500</text><text class="w" x="551" y="160">mm</text><text class="g" x="482" y="219">45</text><text class="w" x="496" y="219">度</text><text class="g" x="528" y="241">600</text><text class="w" x="549" y="240">mm</text>
      <text class="g" transform="translate(576 196) rotate(-90)">300</text><text class="w" transform="translate(576 175) rotate(-90)">mm</text><text class="g" transform="translate(584 223) rotate(-90)">500</text><text class="w" transform="translate(584 202) rotate(-90)">mm</text>
      <text class="cap" x="529" y="278">边坡节点2</text></svg></button>
    <button class="node chosen"><svg viewBox="185 289 221 138" aria-label="边坡节点3">
      <path class="ln" d="M219.500 305v83M219 341l9 4.500h-17l8 4M219 321.500h101.500l25 26v25H219M320.500 307v15M345.500 307v15M320 313.500h26M317 316l6-6M343 316l6-6M371.500 321v27M364 321.500h14M366 347.500h12M369 319l5 5M369 345l5 5"/>
      <text class="g" x="313" y="305">300</text><text class="w" x="336" y="304">mm</text><text class="g" transform="translate(363 355) rotate(-90)">200</text><text class="w" transform="translate(362 334) rotate(-90)">mm</text>
      <text class="cap" x="300" y="420">边坡节点3</text></svg></button>
    <button class="node"><svg viewBox="411 289 221 138" aria-label="边坡节点4">
      <path class="ln" d="M447.500 292v82M447 327l9 4.500h-17l8 4M447 309.500h122.500v34l-24 15H447M545.500 377v15M569.500 377v15M545 382.500h25M543 385l5-5M567 385l5-5M596.500 342v25M589 342.500h14M592 366.500h11M594 340l5 5M594 364l5 5"/>
      <text class="g" x="537" y="374">300</text><text class="w" x="560" y="373">mm</text><text class="g" transform="translate(589 367) rotate(-90)">200</text><text class="w" transform="translate(588 346) rotate(-90)">mm</text>
      <text class="cap" x="524" y="420">边坡节点4</text></svg></button>
  </div>
  <div class="preview"><svg viewBox="183 433 451 224" aria-label="边坡节点3 预览">
    <path class="ln" d="M282.500 457v137M282.500 517l14 6.500h-28l14 6M282 485.500h167.500l42 41v42H282M449.500 461v25M491.500 461v25M449 471.500h43M445 475l8-7M487 475l8-7M535.500 485v42M523 485.500h24M526 526.500h21M532 482l8 8M532 523l8 8"/>
    <text class="g big" x="430" y="456">1165</text><text class="w big" x="476" y="455">mm</text>
    <text class="g big" transform="translate(521 538) rotate(-90)">200</text><text class="w big" transform="translate(518 503) rotate(-90)">mm</text>
    <text class="cap huge" x="413" y="649">边坡节点3</text></svg></div>
  <div class="dfoot"><button>确定</button><button>取消</button></div>
</div>

<svg class="marks" aria-hidden="true">
  <g fill="none" stroke="#f00" stroke-width="7"><rect x="897.500" y="148.500" width="125" height="46"/><rect x="217.500" y="413.500" width="348" height="184"/></g>
  <path d="M0 124C60 137 120 149 182 163C240 176 300 194 346 212C368 220 379 228 382 238C382 242 378 243 376 240C371 232 360 227 344 221C295 205 240 185 180 172C120 158 60 147 0 134Z" fill="#4048cc"/>
  <path d="M22 187L48 206L80 226L114 249L150 273L184 297L206 312L228 326L252 340L270 348L284 354L298 357C304 358 304 365 298 366L286 366L268 361L248 353L218 338L198 324L178 309L144 285L108 259L74 233L44 212L18 191C16 188 19 185 22 187Z" fill="#4048cc"/>
</svg>
</body>
</html>
```
FILE: styles.css
```css
* { box-sizing: border-box; }
html, body { height: 100%; margin: 0; }
body { font: 12px/16px "Open Sans", "Noto Sans CJK SC", sans-serif; color: #000; background: #f0f0f0; overflow: hidden; }
button { font: inherit; color: inherit; background: none; border: 0; padding: 0; margin: 0; }
i { font-style: normal; }
.defs { position: absolute; width: 0; height: 0; }
.ic { width: 16px; height: 16px; flex: none; display: block; }
.up { transform: rotate(180deg); }
.left { transform: rotate(90deg); }
.right { transform: rotate(-90deg); }

.app { display: flex; flex-direction: column; height: 100vh; }

/* title bar */
.titlebar { position: relative; flex: none; height: 23px; display: flex; align-items: center; gap: 5px; padding-left: 2px; background: #fff; color: #999; }
.caption { flex: 1; margin: 0; font: 400 13px/18px Roboto, "Noto Sans CJK SC", sans-serif; white-space: nowrap; overflow: hidden; }
.winbtns { display: flex; height: 20px; align-self: flex-start; }
.winbtns button { width: 46px; display: flex; align-items: center; justify-content: center; color: #888; }
.ball { position: absolute; left: 463px; top: -25px; width: 44px; height: 44px; border-radius: 50%; background: #3fc060; border: 2px solid #e4f4e6; box-shadow: 0 2px 5px rgba(0,0,0,.4); color: #fff; font-weight: 700; text-align: center; line-height: 60px; z-index: 1; }

/* bars and tools */
.bar { display: flex; align-items: center; gap: 7px; background: linear-gradient(#fcfcfc, #ececec); white-space: nowrap; border-radius: 2px; }
.bar.plain { background: none; }
.bar.tight { gap: 6px; }
.tool { display: flex; align-items: center; gap: 4px; height: 24px; flex: none; }
.tool:disabled { color: #8a8a8a; }
.dd { flex: none; width: 9px; height: 4px; background: currentColor; clip-path: polygon(1px 0, 8px 0, 4px 4px); margin-left: 1px; }
.dd.near { margin-left: -3px; }
.sep { flex: none; width: 1px; height: 14px; background: #b4b4b4; margin-right: -2px; }
.tight .sep { margin-right: -1px; }
.sep.tall { height: 24px; }
.grip { flex: none; width: 3px; height: 15px; background: repeating-linear-gradient(#a8a8a8 0 2px, transparent 2px 4px); }
.more { margin-left: auto; align-self: flex-start; font-size: 16px; line-height: 12px; }
.combo { position: relative; display: flex; align-items: center; height: 24px; background: #fff; }
.combo select { appearance: none; border: 0; background: none; font: inherit; padding: 0; color: #000; }

.menurow { flex: none; height: 31px; display: flex; align-items: flex-start; padding-top: 1px; }
.menus { display: flex; justify-content: space-between; padding: 0 9px 0 7px; width: 788px; line-height: 27px; white-space: nowrap; flex: none; }
.menurow .bar { width: 149px; height: 27px; flex: none; gap: 6px; }
.menurow .bar .tool { gap: 3px; }
.panel { height: 27px; background: linear-gradient(#fafafa, #efefef); display: flex; align-items: center; }
.tip { width: 187px; padding-left: 28px; flex: none; }
.tip a { color: #5c2e00; text-decoration: none; }
.account { flex: 1; margin-left: 2px; padding: 0 3px 0 4px; gap: 8px; }
.blue { color: #1a86f0; }

.toolrow { flex: none; height: 29px; display: flex; gap: 3px; padding: 1px 0 2px 1px; }
.g-file { width: 149px; padding: 0 3px 0 4px; flex: none; }
.g-calc { width: 549px; padding: 0 3px 0 4px; flex: none; }
.g-view { flex: 1; padding-right: 2px; }
.dim2 { width: 61px; padding: 0 2px; gap: 3px; }
.dim2 select { width: 28px; }
.g-view .combo { margin-right: -1px; }

/* body */
.body { flex: 1; min-height: 0; display: flex; gap: 5px; padding-top: 1px; }
.side { width: 165px; flex: none; display: flex; flex-direction: column; padding-bottom: 2px; font-family: "Liberation Serif", "Noto Sans CJK SC", serif; }
.sidehead { height: 15px; display: flex; align-items: center; border: 1px solid #8c8c8c; font-size: 13px; line-height: 13px; flex: none; }
.sidehead span { flex: 1; }
.sidehead button { width: 18px; }
.sidehead button .ic { width: 14px; height: 14px; }
.navbtn { flex: none; height: 22px; border: 1px solid #a0a0a0; border-left-color: #fff; border-top-color: #fff; background: #f0f0f0; line-height: 20px; box-shadow: 0 -1px #a0a0a0; }
.sidehead + .navbtn { margin-top: 2px; }
.treebox { flex: 1; min-height: 0; margin-left: 1px; border: 1px solid #888; display: flex; flex-direction: column; background: #f0f0f0; }
.treetools { height: 27px; flex: none; background: linear-gradient(#fff, #e8e8e8); border-bottom: 1px solid #888; }
.pm { display: block; width: 44px; height: 20px; margin: 4px 0 0 1px; }
.treeview { flex: 1; min-height: 0; display: flex; background: #fff; overflow: hidden; }
.tree { flex: 1; list-style: none; margin: 0; padding: 1px 0 0; overflow: hidden; background: repeating-linear-gradient(#999 0 1px, transparent 1px 2px) 13px 0 / 1px 100% no-repeat; }
.tree li { height: 16px; display: flex; align-items: center; white-space: nowrap; }
.tree .leaf { margin-left: 32px; padding-left: 11px; gap: 2px; background: repeating-linear-gradient(#999 0 1px, transparent 1px 2px) 0 0 / 1px 100% no-repeat, repeating-linear-gradient(90deg, #999 0 1px, transparent 1px 2px) 0 8px / 10px 1px no-repeat; }
.leaf span, .branch span { padding: 0 2px; }
.sel span { background: #d8d8d8; padding-right: 4px; }
.branch { padding-left: 4px; gap: 3px; }
.tw { width: 16px; height: 16px; color: #555; background: #fff; margin-right: 1px; }
.vscroll { width: 16px; flex: none; background: #f0f0f0; display: flex; flex-direction: column; color: #555; padding: 2px 0; }
.vthumb { width: 16px; height: 196px; background: #cdcdcd; margin: 102px 0 auto; }
.hscroll { height: 17px; flex: none; display: flex; align-items: center; color: #555; }
.hthumb { width: 102px; height: 15px; background: #cdcdcd; margin: 0 4px 0 3px; }

.main { flex: 1; min-width: 0; display: flex; flex-direction: column; }
.row-edit { flex: none; align-self: flex-start; height: 27px; width: 790px; padding-left: 4px; }
.row-edit .grip { margin-right: -3px; }
.g-axis .grip { margin-right: -2px; }
.row-comp { flex: none; height: 28px; display: flex; gap: 31px; }
.row-comp .bar { height: 27px; margin-top: 1px; }
.g-comp { width: 568px; justify-content: flex-end; padding: 0 5px 0 4px; }
.g-comp .grip { margin-right: auto; }
.g-prop { width: 74px; justify-content: center; }
.g-axis { padding: 0 4px; }
.row-slab { flex: none; align-self: flex-start; height: 28px; width: 1168px; margin-top: 27px; justify-content: flex-end; padding-right: 5px; }
.picked { background: #dce9f5; border: 1px solid #0078d7; padding: 0 3px; margin: 0 -3px 0 0; }
.g-comp .picked { margin: 0 17px 0 0; }
.after { margin-left: 8px; }

.canvas { flex: 1; min-height: 0; background: #000; overflow: hidden; margin-right: 1px; }
.canvas svg { display: block; width: calc(100% + 1px); height: 100%; }
.cad text { fill: #d8d8d8; font: 14px "Liberation Sans", sans-serif; text-anchor: middle; }
.rebar text { fill: #8c82a8; font: 7px "Liberation Mono", "Noto Sans CJK SC", monospace; text-anchor: middle; }
.rebar .light { fill: #a8a8a8; }

.row-snap { flex: none; height: 33px; display: flex; gap: 5px; padding-top: 2px; align-items: flex-start; }
.row-snap .bar { height: 27px; }
.g-snap { width: 472px; justify-content: flex-end; padding-right: 1px; }
.g-off { gap: 2px; padding: 0 3px; color: #777; }
.off { width: 60px; padding: 0 2px 0 4px; font-family: "Noto Sans CJK SC", sans-serif; color: #000; }
.off select { flex: 1; min-width: 0; }
.g-off .sep { margin: 0 0 0 2px; }
.spin { position: relative; display: flex; width: 57px; height: 23px; border: 1px solid #7a7a7a; background: #f6f6f6; }
.spin.wide { width: 68px; }
.spin input { width: 100%; border: 0; background: none; font: inherit; color: #888; text-align: right; padding: 0 17px 0 0; }
.sp { position: absolute; right: 3px; top: 3px; bottom: 3px; width: 7px; background: #777; clip-path: polygon(0 4px, 50% 0, 100% 4px, 0 4px, 0 calc(100% - 4px), 50% 100%, 100% calc(100% - 4px), 0 calc(100% - 4px)); }
.ylab { margin-left: 2px; }
.check { display: flex; align-items: center; gap: 8px; color: #000; margin-right: 2px; }
.check input { appearance: none; width: 11px; height: 11px; margin: 0; border: 1px solid #888; background: #f4f4f4; }

.detail { flex: none; height: 201px; display: flex; }
.splitter { width: 12px; flex: none; padding: 2px 0 0 1px; background: radial-gradient(circle at 2px 2px, #bbb 1px, transparent 1.500px) 2px 14px / 5px 5px; }
.splitter svg { display: block; width: 10px; height: 10px; background: #f0f0f0; }
.rebarpane { flex: 1; min-width: 0; display: flex; flex-direction: column; }
.row-rebar { height: 27px; flex: none; padding-left: 427px; }
.gridbox { flex: 1; min-height: 0; display: flex; flex-direction: column; justify-content: space-between; background: #fff; border: 1px solid #a0a0a0; border-width: 1px 1px 2px; margin-bottom: 1px; overflow: hidden; }
table { width: calc(100% - 1px); table-layout: fixed; border-collapse: collapse; font: 12px/16px "Liberation Serif", "Noto Sans CJK SC", serif; }
th, td { border: 1px solid #bdbdbd; border-top: 0; border-left: 0; padding: 0; height: 19px; font-weight: 400; white-space: nowrap; overflow: hidden; text-align: center; }
th { background: linear-gradient(#fff, #f2f2f2); height: 20px; }
.cut { text-align: left; padding-left: 11px; }
.c-formula { width: 166px; }
.c-desc { width: 156px; }
.c-len { width: 62px; }
.c-num { width: 38px; }
.c-lap { width: 39px; }
.c-loss { width: 48px; }
.c-kg { width: 61px; }
.c-type { width: 71px; }
.c-last { width: 36px; }
.gridscroll { height: 16px; flex: none; background: #f0f0f0; display: flex; justify-content: space-between; color: #555; padding: 0 2px 0 17px; }
.gridscroll i { width: 71%; height: 15px; background: #cdcdcd; }

.status { flex: none; height: 21px; display: flex; gap: 2px; background: #e0e0e0; padding: 1px 0; font: 12px/18px "Liberation Serif", "Noto Sans CJK SC", serif; white-space: nowrap; border-top: 1px solid #fff; }
.status span { background: linear-gradient(#f0f0f0, #fdfdfd); border: 1px solid #d4d4d4; padding-left: 1px; line-height: 17px; overflow: hidden; }
.s-xy { width: 148px; }
.s-h { width: 78px; }
.s-b { width: 98px; }
.s-0 { width: 48px; }
.s-msg { flex: 1; }
.s-fps { width: 70px; }

/* taskbar */
.taskbar { flex: none; height: 40px; display: flex; align-items: center; background: #05171c; color: #fff; }
.start { width: 48px; height: 40px; background: #020a0c; display: flex; align-items: center; justify-content: center; }
.search { width: 344px; height: 40px; background: #f0f0f0; display: flex; align-items: center; gap: 10px; padding: 0 12px 0 8px; flex: none; }
.ring { width: 22px; height: 22px; flex: none; }
.search input { flex: 1; min-width: 0; border: 0; background: none; font: 14px/20px "Noto Sans CJK SC", sans-serif; padding: 0; }
.search input::placeholder { color: #333; opacity: 1; }
.apps { display: flex; align-items: center; width: 439px; flex: none; }
.apps button { width: 51px; height: 40px; display: flex; align-items: center; justify-content: center; }
.apps svg { width: 24px; height: 24px; }
.apps .helper svg { width: 28px; }
.apps .run { width: 39px; margin: 0 5px; border-bottom: 3px solid #76b9ed; }
.bars { width: 4px; height: 16px; border: 1px solid #4a5a5e; border-width: 0 1px; flex: none; }
.apps .bars { margin: 0 12px 0 4px; }
.tscroll { width: 16px; height: 40px; background: #f0f0f0; color: #222; display: flex; flex-direction: column; justify-content: space-between; flex: none; margin-right: 12px; }
.links { margin-left: 10px; width: 48px; flex: none; }
.people { flex: none; }
.two { display: flex; flex-direction: column; text-align: center; line-height: 18px; flex: none; }
.cpu { width: 94px; margin: 0 0 0 8px; }
.tray { display: flex; align-items: center; gap: 9px; flex: 1; margin-left: -5px; }
.kb { width: 22px; height: 14px; }
.zh { width: 14px; text-align: center; }
.tray svg { flex: none; }
.clock { width: 68px; }
.notif { position: relative; width: 56px; height: 40px; border-right: 5px solid #16262b; display: flex; align-items: center; justify-content: center; flex: none; }
.notif svg { width: 18px; height: 18px; }
.notif b { position: absolute; left: 23px; top: 18px; width: 16px; height: 16px; border-radius: 50%; background: #333; font-size: 12px; line-height: 16px; }

/* dialog */
.dialog { position: absolute; left: 180px; top: 117px; width: 456px; background: #f0f0f0; border: 1px solid #999; border-top-color: #aaa; box-shadow: 2px 3px 8px rgba(0,0,0,.4); }
.dhead { height: 25px; background: #fff; color: #999; display: flex; align-items: center; justify-content: space-between; padding: 0 7px 0 3px; }
.nodes { display: grid; grid-template-columns: 1fr 1fr; gap: 3px; padding: 2px 2px 4px 3px; }
.node { border: 1px solid #fff; border-right-color: #a0a0a0; border-bottom-color: #a0a0a0; background: #000; display: block; }
.node svg { display: block; width: 100%; height: auto; }
.chosen { outline: 3px solid #f00; outline-offset: -4px; }
.preview { background: #000; border: 1px solid #f8f8f8; margin: 0 1px; box-shadow: 0 -1px #999, 0 1px #999; }
.preview svg { display: block; width: 100%; }
.ln { fill: none; stroke: #fff; }
.dialog .g { fill: #0f0; font: 12px "Liberation Sans", sans-serif; }
.dialog .w { fill: #fff; font: 10px "Liberation Mono", "Noto Sans CJK SC", monospace; }
.dialog .deg { font-size: 12px; }
.dialog text.g.big { font: 21px "Liberation Serif", serif; }
.dialog text.w.big { font: 18px "Liberation Mono", monospace; }
.dialog text.cap { fill: #fff; font: 500 16px "Liberation Serif", "Noto Sans CJK SC", serif; text-anchor: middle; }
.dialog text.huge { font-size: 28px; }
.dfoot { height: 42px; display: flex; justify-content: flex-end; align-items: center; gap: 13px; padding: 4px 13px 0 0; }
.dfoot button { width: 72px; height: 23px; border: 1px solid #adadad; background: #e1e1e1; }

.marks { position: absolute; left: 0; top: 0; width: 100%; height: 100%; pointer-events: none; }
```
